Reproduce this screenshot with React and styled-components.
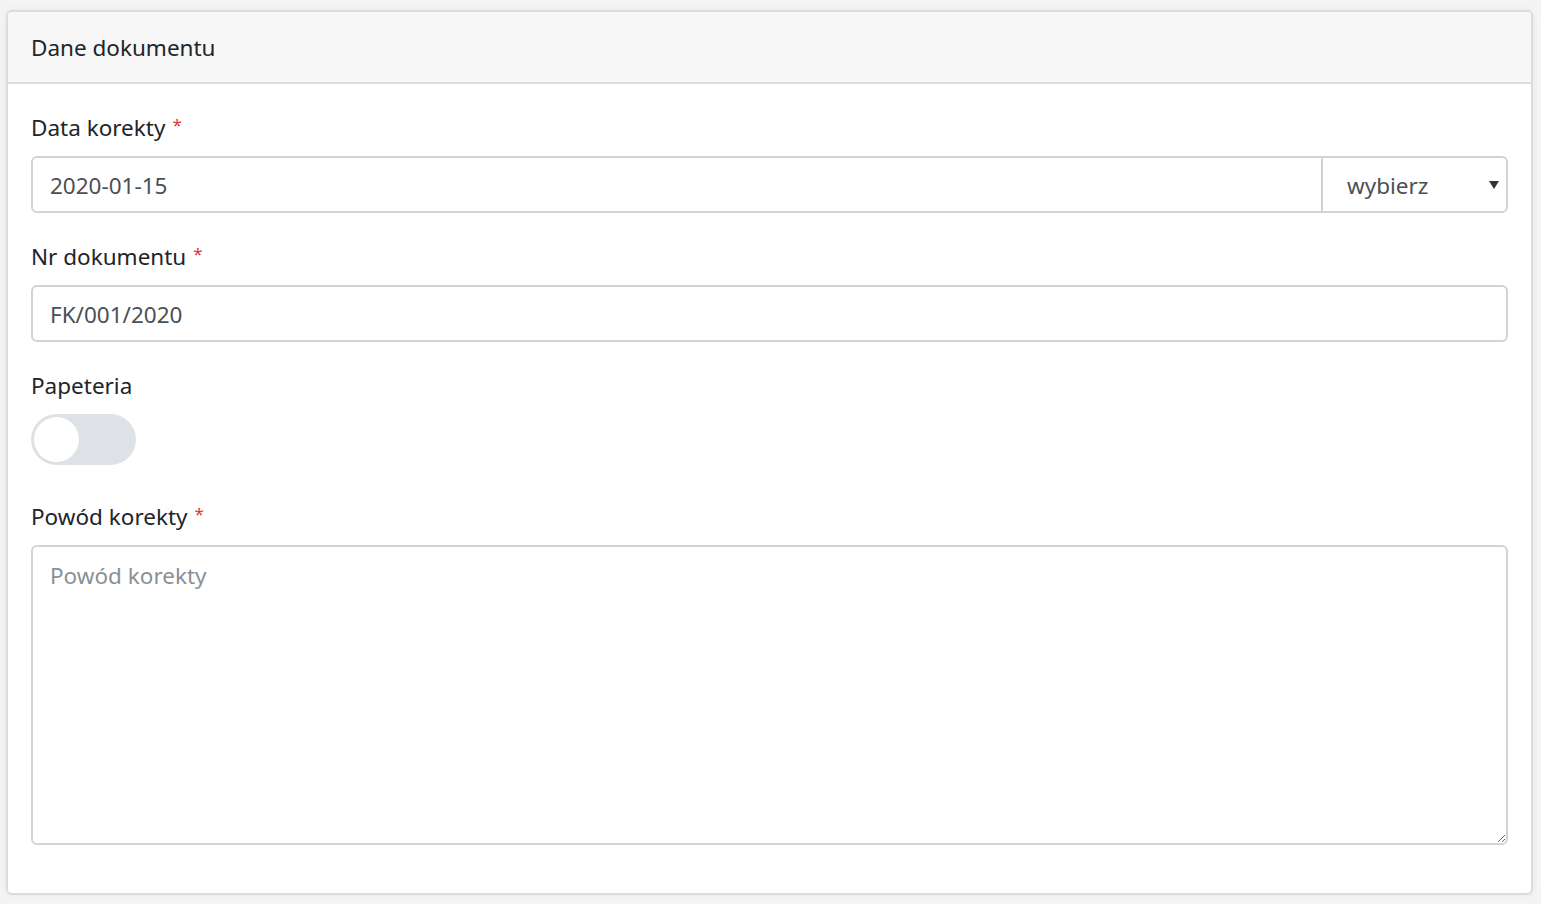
import React from "react";
import styled, { createGlobalStyle } from "styled-components";

const Global = createGlobalStyle`
  html, body { margin: 0; padding: 0; }
  body {
    background: #f4f4f4;
    font-family: "Noto Sans", "Open Sans", sans-serif;
    color: #212529;
  }
  * { box-sizing: border-box; }
`;

const FS = "22.5px";

const Page = styled.div`
  padding: 10px 8px 10px 6px;
`;

const Card = styled.section`
  background: #fff;
  border: 2px solid #dcdcdc;
  border-radius: 6px;
  box-shadow: 0 0 6px rgba(0, 0, 0, 0.06);
  overflow: hidden;
`;

const CardHeader = styled.header`
  background: #f7f7f7;
  border-bottom: 2px solid #dcdcdc;
  padding: 18px 23px 16px;
  font-size: ${FS};
  line-height: 36px;
`;

const CardBody = styled.div`
  padding: 24px 23px 24px 23px;
  display: flex;
  flex-direction: column;
`;

const Group = styled.div`
  display: flex;
  flex-direction: column;
  margin-bottom: ${(p) => p.$mb ?? 24}px;
`;

const Label = styled.label`
  font-size: ${FS};
  line-height: 36px;
  margin-top: 2px;
  margin-bottom: ${(p) => p.$mb ?? 10}px;
`;

const Req = styled.span`
  color: #e3342f;
  font-size: 17px;
  vertical-align: top;
  margin-left: 7px;
  position: relative;
  top: -3px;
`;

const InputGroup = styled.div`
  display: flex;
  height: 57px;
`;

const Input = styled.input`
  ${(p) => (p.$joined ? "flex: 1; min-width: 0;" : "width: 100%;")}
  height: 57px;
  border: 2px solid #ced4da;
  border-radius: ${(p) => (p.$joined ? "6px 0 0 6px" : "6px")};
  padding: 2px 17px 0;
  font: inherit;
  font-size: ${FS};
  color: #495057;
  background: #fff;
  outline: none;
`;

const SelectBox = styled.div`
  position: relative;
  width: 187px;
  height: 57px;
  border: 2px solid #ced4da;
  margin-left: -2px;
  border-radius: 0 6px 6px 0;
  display: flex;
  align-items: center;
  padding: 2px 0 0 24px;
  font-size: ${FS};
  color: #495057;
  background: #fff;
`;

const Caret = styled.svg`
  position: absolute;
  right: 7px;
  top: 22px;
`;

const Switch = styled.div`
  width: 105px;
  height: 51px;
  border-radius: 26px;
  background: #dee2e6;
  padding: 3px;
  display: flex;
  align-items: center;
`;

const Knob = styled.div`
  width: 45px;
  height: 45px;
  border-radius: 50%;
  background: #fff;
`;

const TextArea = styled.textarea`
  height: 300px;
  border: 2px solid #ced4da;
  border-radius: 6px;
  padding: 11px 17px;
  font: inherit;
  font-size: ${FS};
  line-height: 36px;
  color: #495057;
  resize: vertical;
  outline: none;
  &::placeholder { color: #8a9096; }
`;

export default function App() {
  return (
    <>
      <Global />
      <Page>
        <Card>
          <CardHeader>Dane dokumentu</CardHeader>
          <CardBody>
            <Group>
              <Label>
                Data korekty<Req>*</Req>
              </Label>
              <InputGroup>
                <Input $joined defaultValue="2020-01-15" />
                <SelectBox>
                  wybierz
                  <Caret width="10" height="10" viewBox="0 0 10 10">
                    <path d="M0 1 L10 1 L5 9 Z" fill="#333" />
                  </Caret>
                </SelectBox>
              </InputGroup>
            </Group>
            <Group>
              <Label>
                Nr dokumentu<Req>*</Req>
              </Label>
              <Input defaultValue="FK/001/2020" />
            </Group>
            <Group $mb={32}>
              <Label>Papeteria</Label>
              <Switch>
                <Knob />
              </Switch>
            </Group>
            <Group>
              <Label $mb={10}>
                Powód korekty<Req>*</Req>
              </Label>
              <TextArea placeholder="Powód korekty" />
            </Group>
          </CardBody>
        </Card>
      </Page>
    </>
  );
}
